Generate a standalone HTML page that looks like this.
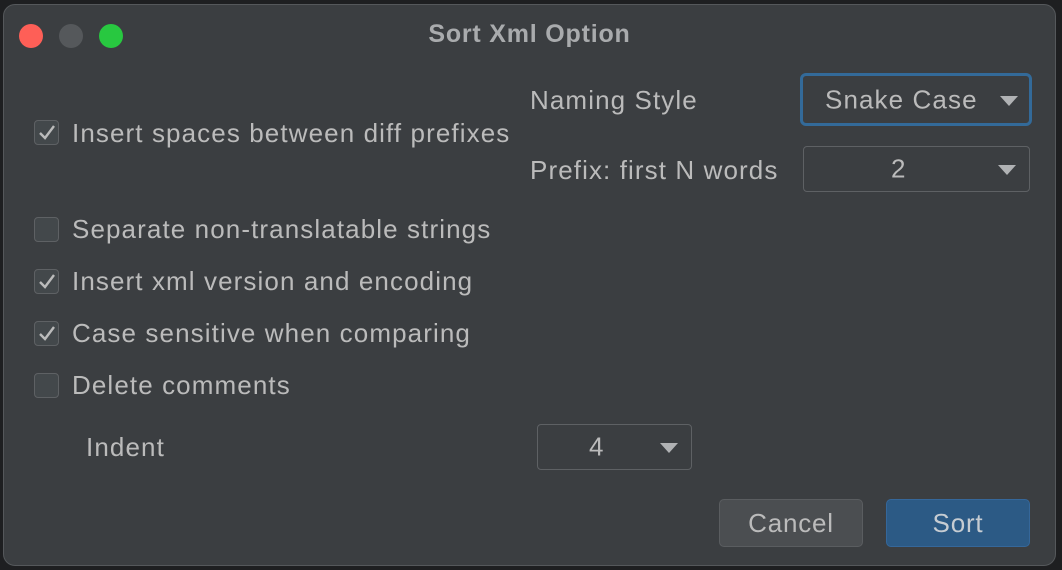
<!DOCTYPE html>
<html><head><style>
body{margin:0;width:1062px;height:570px;background:#1e1f21;overflow:hidden;font-family:"Liberation Sans",sans-serif;color:#bbbbbb;}
.win{position:absolute;left:3px;top:4px;width:1053px;height:562px;background:#3b3e41;border-radius:12px;border:1px solid #55585b;box-sizing:border-box;}
.dot{position:absolute;top:19px;width:24px;height:24px;border-radius:50%;}
.t{position:absolute;font-size:26px;white-space:nowrap;letter-spacing:1.1px;}
.title{position:absolute;top:15px;left:0;width:100%;text-align:center;font-size:25px;font-weight:bold;color:#a9abad;letter-spacing:0.8px;}
.cb{position:absolute;width:25px;height:25px;border:1px solid #5e6164;background:#43484b;border-radius:4px;box-sizing:border-box;}
.cb svg{position:absolute;left:3px;top:3px;}
.dd{position:absolute;border:1px solid #5e6164;border-radius:4px;box-sizing:border-box;background:#3b3e41;font-size:26px;letter-spacing:1.1px;}
.dd span{position:absolute;top:50%;transform:translateY(-50%);}
.arr{position:absolute;right:13px;top:50%;margin-top:-4px;width:0;height:0;border-left:9px solid transparent;border-right:9px solid transparent;border-top:10px solid #b0b2b4;}
.btn{position:absolute;border-radius:5px;box-sizing:border-box;font-size:26px;text-align:center;letter-spacing:0.8px;}
</style></head><body>
<div class="win">
<div class="dot" style="left:15px;background:#fe5f57"></div>
<div class="dot" style="left:55px;background:#55585b"></div>
<div class="dot" style="left:95px;background:#28c840"></div>
<div class="title">Sort Xml Option</div>

<div class="cb" style="left:30px;top:115px"><svg width="18" height="18" viewBox="0 0 18 18"><path d="M2 9 L7 14 L16 2" stroke="#bbbbbb" stroke-width="2.4" fill="none"/></svg></div>
<div class="t" style="left:68px;top:113px">Insert spaces between diff prefixes</div>
<div class="cb" style="left:30px;top:212px"></div>
<div class="t" style="left:68px;top:209px">Separate non-translatable strings</div>
<div class="cb" style="left:30px;top:264px"><svg width="18" height="18" viewBox="0 0 18 18"><path d="M2 9 L7 14 L16 2" stroke="#bbbbbb" stroke-width="2.4" fill="none"/></svg></div>
<div class="t" style="left:68px;top:261px">Insert xml version and encoding</div>
<div class="cb" style="left:30px;top:316px"><svg width="18" height="18" viewBox="0 0 18 18"><path d="M2 9 L7 14 L16 2" stroke="#bbbbbb" stroke-width="2.4" fill="none"/></svg></div>
<div class="t" style="left:68px;top:313px">Case sensitive when comparing</div>
<div class="cb" style="left:30px;top:368px"></div>
<div class="t" style="left:68px;top:365px">Delete comments</div>
<div class="t" style="left:82px;top:427px">Indent</div>

<div class="t" style="left:526px;top:80px">Naming Style</div>
<div class="t" style="left:526px;top:150px">Prefix: first N words</div>

<div class="dd" style="left:796px;top:68px;width:232px;height:53px;border:3px solid #336a99;border-radius:6px"><span style="left:22px">Snake Case</span><div class="arr" style="right:11px"></div></div>
<div class="dd" style="left:799px;top:141px;width:227px;height:46px"><span style="left:87px">2</span><div class="arr"></div></div>
<div class="dd" style="left:533px;top:419px;width:155px;height:46px"><span style="left:51px">4</span><div class="arr"></div></div>

<div class="btn" style="left:715px;top:494px;width:144px;height:48px;background:#4b4e51;border:1px solid #5a5d60;line-height:46px">Cancel</div>
<div class="btn" style="left:882px;top:494px;width:144px;height:48px;background:#2c5a85;border:1px solid #35679a;line-height:46px;color:#c6ccd2">Sort</div>
</div>
</body></html>
